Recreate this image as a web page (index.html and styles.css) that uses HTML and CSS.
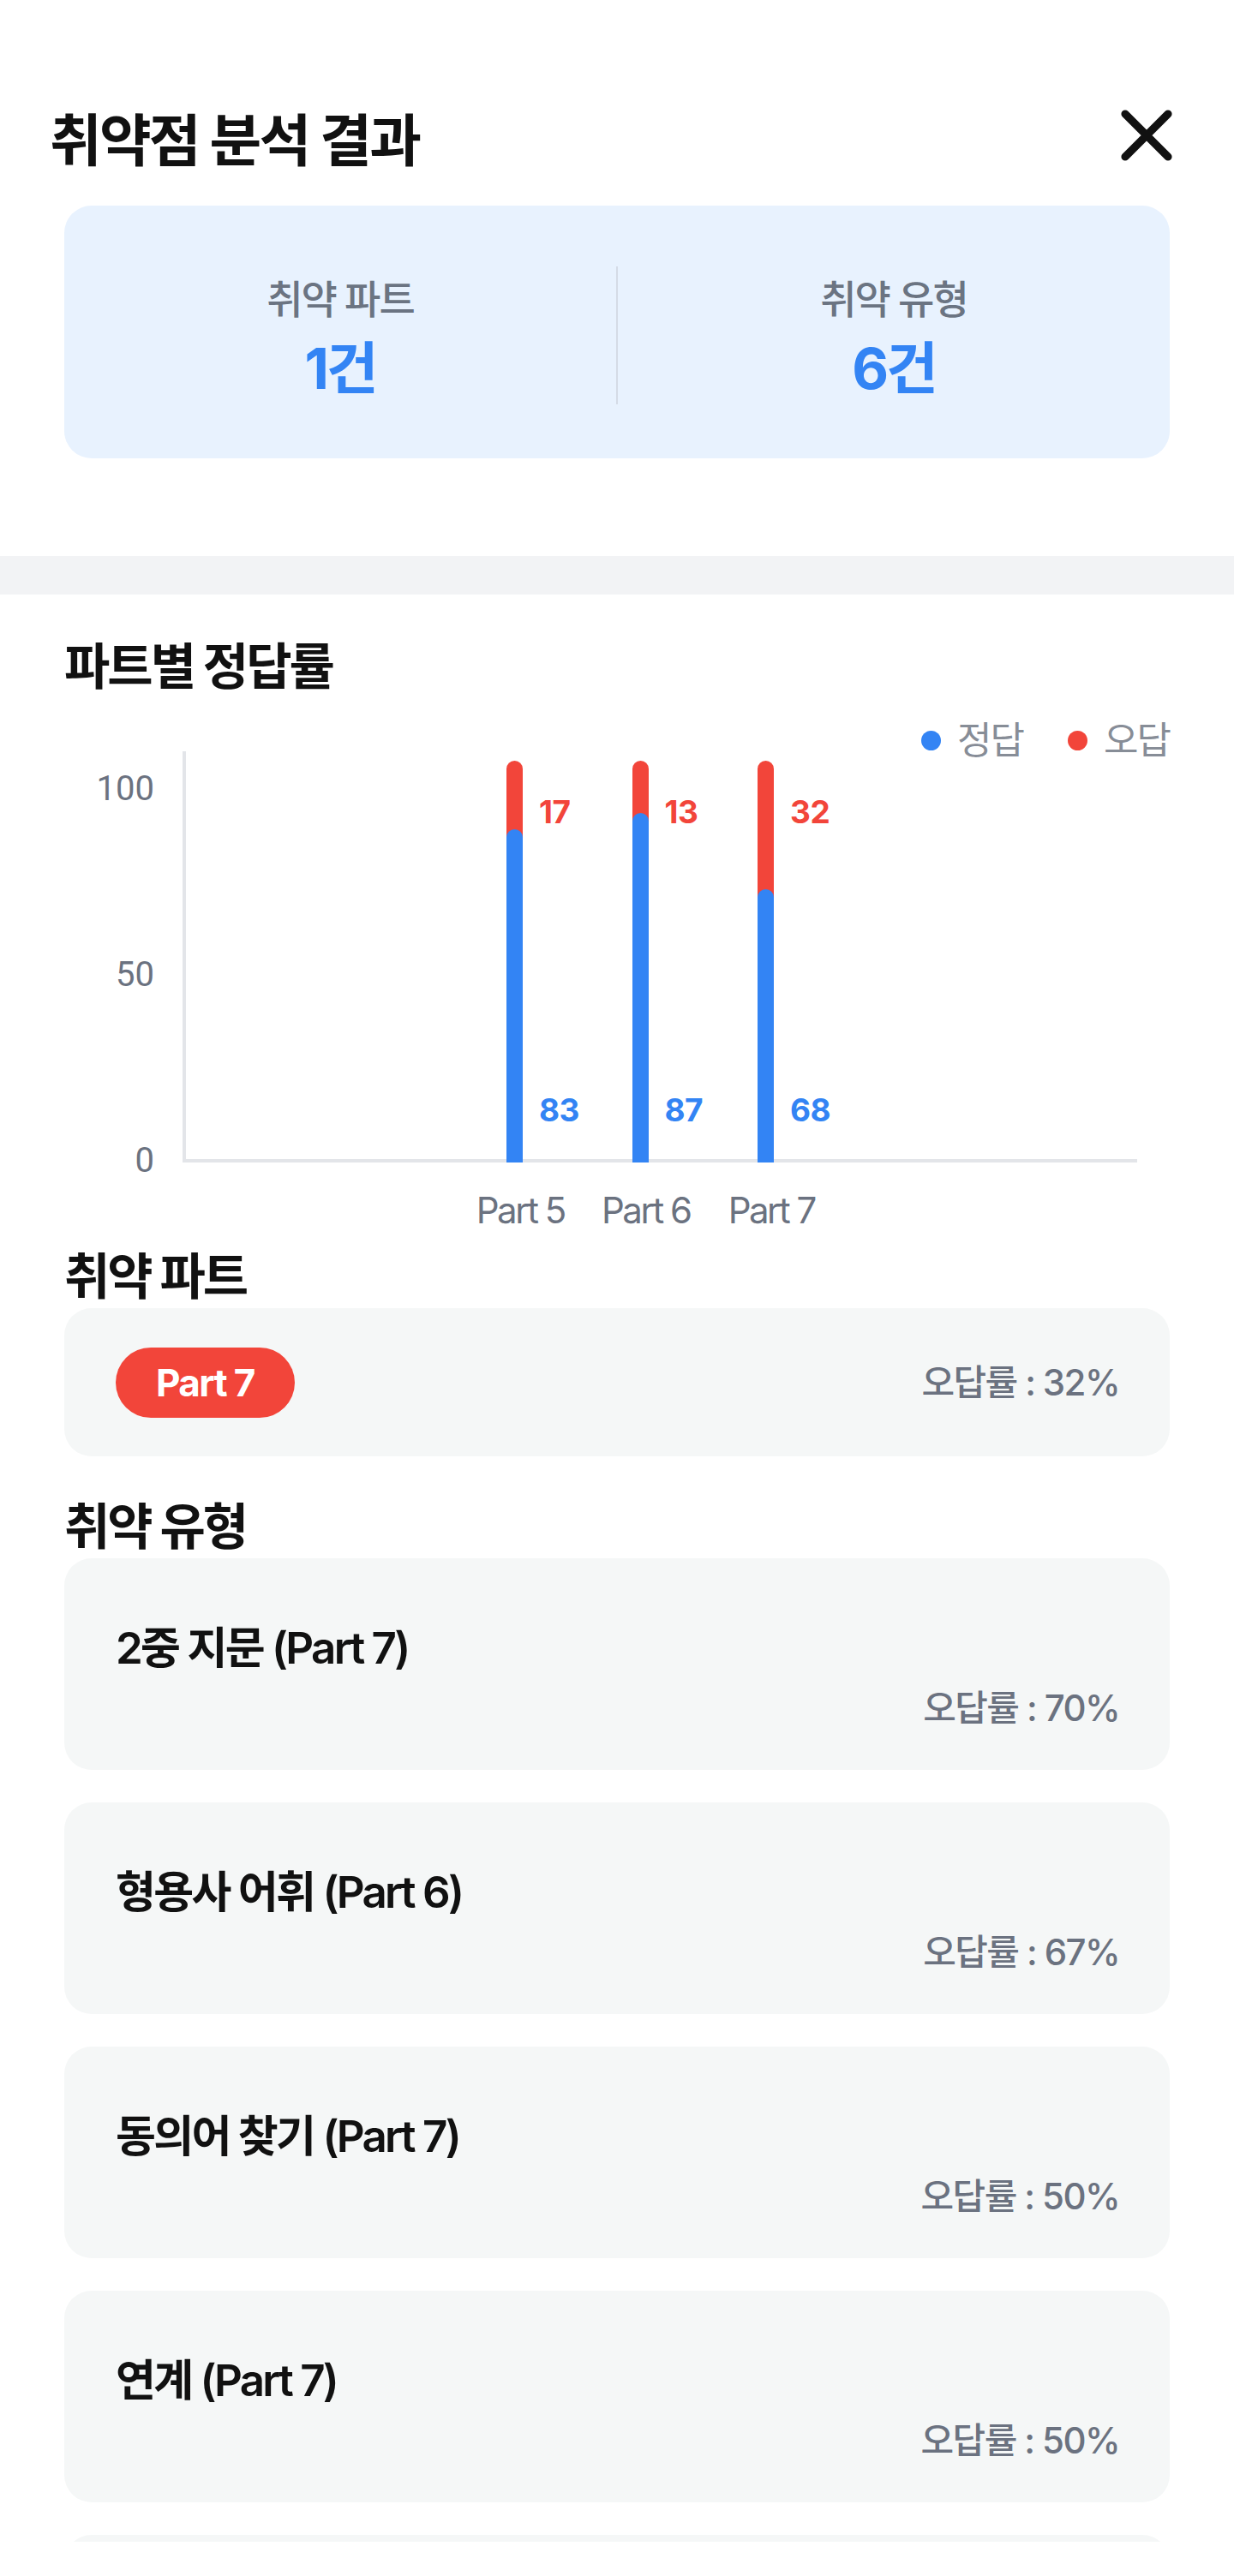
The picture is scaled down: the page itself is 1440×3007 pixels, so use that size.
FILE: index.html
```html
<!DOCTYPE html>
<html lang="ko">
<head>
    <meta charset="UTF-8">
    <meta name="viewport" content="width=device-width, initial-scale=1.0">
    <title>취약점 분석 결과</title>
    <link rel="stylesheet" href="styles.css">
</head>
<body>
<div class="screen">
    <div class="sheet">
        <div class="sheet-header">
            <h1>취약점 분석 결과</h1>
            <button class="close-btn" aria-label="닫기">
                <svg viewBox="0 0 24 24" width="100" height="100">
                    <path d="M6 6l12 12M18 6L6 18" fill="none" stroke="#111" stroke-width="2.2" stroke-linecap="round"/>
                </svg>
            </button>
        </div>

        <div class="summary">
            <div class="summary-card">
                <div class="summary-col">
                    <div class="summary-label">취약 파트</div>
                    <div class="summary-value">1건</div>
                </div>
                <div class="summary-divider"></div>
                <div class="summary-col">
                    <div class="summary-label">취약 유형</div>
                    <div class="summary-value">6건</div>
                </div>
            </div>
        </div>

        <div class="band"></div>

        <div class="section">
            <h2>파트별 정답률</h2>
            <div class="legend">
                <span class="legend-item"><i class="dot dot-blue"></i>정답</span>
                <span class="legend-item"><i class="dot dot-red"></i>오답</span>
            </div>

            <div class="chart">
                <div class="y-axis">
                    <span>100</span>
                    <span>50</span>
                    <span>0</span>
                </div>
                <div class="plot">
                    <div class="bar-group">
                        <div class="bar"><div class="bar-fill" style="height: 83%"></div></div>
                        <div class="bar-values">
                            <span class="val-wrong">17</span>
                            <span class="val-right">83</span>
                        </div>
                    </div>
                    <div class="bar-group">
                        <div class="bar"><div class="bar-fill" style="height: 87%"></div></div>
                        <div class="bar-values">
                            <span class="val-wrong">13</span>
                            <span class="val-right">87</span>
                        </div>
                    </div>
                    <div class="bar-group">
                        <div class="bar"><div class="bar-fill" style="height: 68%"></div></div>
                        <div class="bar-values">
                            <span class="val-wrong">32</span>
                            <span class="val-right">68</span>
                        </div>
                    </div>
                </div>
            </div>
            <div class="x-axis">
                <span>Part 5</span>
                <span>Part 6</span>
                <span>Part 7</span>
            </div>

            <h2 class="sub-title">취약 파트</h2>
            <div class="part-card">
                <span class="pill">Part 7</span>
                <span class="rate">오답률 : 32%</span>
            </div>

            <h2 class="sub-title sub-gap">취약 유형</h2>
            <div class="type-list">
                <div class="type-card">
                    <div class="type-name">2중 지문 (Part 7)</div>
                    <div class="rate">오답률 : 70%</div>
                </div>
                <div class="type-card">
                    <div class="type-name">형용사 어휘 (Part 6)</div>
                    <div class="rate">오답률 : 67%</div>
                </div>
                <div class="type-card">
                    <div class="type-name">동의어 찾기 (Part 7)</div>
                    <div class="rate">오답률 : 50%</div>
                </div>
                <div class="type-card">
                    <div class="type-name">연계 (Part 7)</div>
                    <div class="rate">오답률 : 50%</div>
                </div>
                <!-- next card only peeks in above the bottom edge -->
                <div class="type-card"></div>
            </div>
        </div>
    </div>
</div>
</body>
</html>
```

FILE: styles.css
```css
* {
    box-sizing: border-box;
}
body {
    margin: 0;
    background: #fff;
    font-family: "Inter", "Noto Sans CJK KR", sans-serif;
    color: #111;
}
.screen {
    width: 1440px;
    height: 3007px;
    overflow: hidden;
    background: #fff;
}
.sheet {
    height: 2967px;
    overflow: hidden;
}
.sheet-header {
    display: flex;
    justify-content: space-between;
    align-items: flex-start;
    padding: 108px 52px 0 58px;
}
.sheet-header h1 {
    margin: 16px 0 0;
    font-size: 66px;
    line-height: 80px;
    font-weight: 700;
    letter-spacing: -2.8px;
    color: #111;
}
.close-btn {
    width: 100px;
    height: 100px;
    padding: 0;
    border: 0;
    background: none;
}
.close-btn svg {
    display: block;
}

.summary {
    padding: 32px 75px 114px;
}
.summary-card {
    display: flex;
    align-items: flex-end;
    background: #e8f2fe;
    border-radius: 32px;
    padding: 71px 0 63px;
}
.summary-col {
    flex: 1;
    text-align: center;
    display: flex;
    flex-direction: column;
    gap: 9px;
}
.summary-divider {
    width: 2px;
    height: 161px;
    background: #d4dbe6;
}
.summary-label {
    font-size: 46px;
    line-height: 60px;
    font-weight: 500;
    letter-spacing: -2px;
    color: #6b7482;
}
.summary-value {
    font-size: 66px;
    line-height: 84px;
    font-weight: 700;
    letter-spacing: -3px;
    color: #3384f4;
}

.band {
    height: 45px;
    background: #f2f3f5;
}

.section {
    padding: 47px 75px 0;
}
.section h2 {
    margin: 0;
    font-size: 58px;
    line-height: 74px;
    font-weight: 700;
    letter-spacing: -3px;
    color: #111;
}

.legend {
    display: flex;
    justify-content: flex-end;
    gap: 52px;
    margin: 21px 0 -15px;
    font-size: 44px;
    line-height: 56px;
    letter-spacing: -2px;
    color: #878d97;
}
.legend-item {
    display: flex;
    align-items: center;
    gap: 19px;
}
.dot {
    display: block;
    width: 23px;
    height: 23px;
    border-radius: 50%;
}
.dot-blue {
    background: #3384f4;
}
.dot-red {
    background: #f2453a;
}

.chart {
    display: flex;
}
.y-axis {
    width: 138px;
    height: 480px;
    padding: 20px 33px 0 0;
    display: flex;
    flex-direction: column;
    align-items: flex-end;
    gap: 169px;
    font-family: "Roboto", sans-serif;
    font-size: 40px;
    line-height: 48px;
    color: #6b7280;
}
.plot {
    width: 1114px;
    height: 480px;
    border-left: 4px solid #e3e5e9;
    border-bottom: 4px solid #e3e5e9;
    display: flex;
    align-items: flex-end;
    padding-left: 374px;
}
.bar-group {
    width: 146.5px;
    display: flex;
    margin-bottom: -4px;
}
.bar {
    width: 19px;
    height: 469px;
    background: #f2453a;
    border-radius: 10px 10px 0 0;
    display: flex;
    flex-direction: column;
    justify-content: flex-end;
}
.bar-fill {
    background: #3384f4;
    border-radius: 10px 10px 0 0;
}
.bar-values {
    height: 469px;
    margin-left: 19px;
    padding: 38px 0 39px;
    display: flex;
    flex-direction: column;
    justify-content: space-between;
    font-size: 37px;
    line-height: 44px;
    font-weight: 700;
    letter-spacing: -0.5px;
}
.val-wrong {
    color: #f2453a;
}
.val-right {
    color: #3384f4;
}

.x-axis {
    display: flex;
    margin-top: 28px;
    padding-left: 459px;
    font-size: 42px;
    line-height: 56px;
    letter-spacing: -2.5px;
    color: #6b7280;
}
.x-axis span {
    width: 146.5px;
    text-align: center;
    white-space: nowrap;
}

.section .sub-title {
    margin-top: 12px;
}
.section .sub-gap {
    margin-top: 45px;
}

.part-card {
    height: 173px;
    display: flex;
    justify-content: space-between;
    align-items: center;
    padding: 0 59px 0 60px;
    background: #f5f7f7;
    border-radius: 32px;
}
.pill {
    height: 82px;
    padding: 0 47px;
    border-radius: 41px;
    background: #f2453a;
    color: #fff;
    font-size: 44px;
    line-height: 82px;
    font-weight: 700;
    letter-spacing: -1.6px;
}
.rate {
    font-size: 42px;
    line-height: 56px;
    font-weight: 500;
    letter-spacing: -1.6px;
    color: #6b7280;
    text-align: right;
}

.type-list {
    display: flex;
    flex-direction: column;
    gap: 38px;
}
.type-card {
    height: 247px;
    flex-shrink: 0;
    display: flex;
    flex-direction: column;
    gap: 6px;
    padding: 69px 59px 44px 60px;
    background: #f5f7f7;
    border-radius: 32px;
}
.type-name {
    font-size: 51px;
    line-height: 72px;
    font-weight: 600;
    letter-spacing: -2.7px;
    color: #111;
}
```
